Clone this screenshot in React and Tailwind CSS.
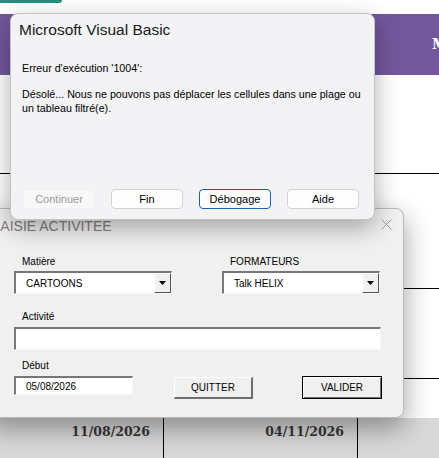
import React from "react";

const sans = "font-['Liberation_Sans',Arial,sans-serif]";

const Combo = ({ value }) => (
  <div className="w-[158px] h-[23px] flex bg-white border-t-2 border-l-2 border-r border-b border-t-[#777] border-l-[#777] border-r-[#f7f7f7] border-b-[#f7f7f7]">
    <div className="flex-1 flex items-center pl-[10px] text-[10px] text-black">{value}</div>
    <div className="w-[17px] h-full flex items-center justify-center bg-[#f0f0f0] border-t border-l border-r border-b border-t-white border-l-white border-r-[#555] border-b-[#555]">
      <svg width="7" height="4" viewBox="0 0 7 4">
        <polygon points="0,0 7,0 3.5,4" fill="#000" />
      </svg>
    </div>
  </div>
);

const Field = ({ value, className }) => (
  <div className={`flex items-center bg-white border-t-2 border-l-2 border-r border-b border-t-[#777] border-l-[#777] border-r-[#f7f7f7] border-b-[#f7f7f7] text-[10px] text-black ${className}`}>
    {value}
  </div>
);

const Label = ({ children, className = "" }) => (
  <div className={`text-[10px] leading-[12px] text-black pl-[8px] ${className}`}>{children}</div>
);

const DialogButton = ({ children, disabled, focused }) => (
  <button
    className={`w-[72px] h-[20px] rounded-[4px] text-[11px] flex items-center justify-center ${
      disabled
        ? "bg-[#f8f8f9] border border-[#f0eff2] text-[#9c9c9c]"
        : focused
        ? "bg-[#fdfdfd] border-[1.5px] border-[#1363b8] text-black"
        : "bg-[#fdfdfd] border border-[#d2d2d2] text-black"
    }`}
  >
    {children}
  </button>
);

export default function App() {
  return (
    <div className={`relative w-[439px] h-[458px] overflow-hidden bg-white ${sans}`}>
      {/* Sheet behind */}
      <div className="h-[3px] flex">
        <div className="w-[62px] h-full bg-[#22907c] rounded-br-[3px]" />
      </div>
      <div className="h-[11px]" />
      <div className="h-[61px] bg-[#73579d] flex items-center overflow-hidden">
        <span className="ml-[432px] font-['DejaVu_Serif',serif] font-bold text-[14px] text-white whitespace-nowrap">M</span>
      </div>
      <div className="h-[98px]" />
      <div className="h-px bg-black" />
      <div className="h-[114px]" />
      <div className="h-px bg-black" />
      <div className="h-[89px]" />
      <div className="h-px bg-black" />
      <div className="h-[39px]" />
      <div className="h-[40px] bg-[#d9d9d9] flex">
        <div className="w-[164px] border-r border-black flex justify-end pt-[5px] pr-[13px] font-['DejaVu_Serif',serif] font-bold text-[12.5px] text-[#383838]">
          11/08/2026
        </div>
        <div className="w-[194px] border-r border-black flex justify-end pt-[5px] pr-[13px] font-['DejaVu_Serif',serif] font-bold text-[12.5px] text-[#383838]">
          04/11/2026
        </div>
      </div>

      {/* UserForm window */}
      <div className="absolute left-[-14px] top-[208px] w-[418px] h-[210px] bg-[#f0f0f0] rounded-[8px] border border-[#b9b9b9] shadow-[0_10px_28px_rgba(0,0,0,0.38)] flex flex-col">
        <div className="h-[31px] flex items-center justify-between pl-[4px] pr-[11px]">
          <span className="text-[14px] text-[#808080] pt-[3px]">SAISIE ACTIVITEE</span>
          <svg width="11" height="11" viewBox="0 0 11 11">
            <path d="M0.5 0.5 L10.5 10.5 M10.5 0.5 L0.5 10.5" stroke="#9a9a9a" strokeWidth="1" />
          </svg>
        </div>
        <div className="pl-[27px] flex flex-col">
          <div className="flex gap-[50px] mt-[16px]">
            <div className="flex flex-col gap-[3px]">
              <Label>Matière</Label>
              <Combo value="CARTOONS" />
            </div>
            <div className="flex flex-col gap-[3px]">
              <Label>FORMATEURS</Label>
              <Combo value="Talk HELIX" />
            </div>
          </div>
          <Label className="mt-[17px]">Activité</Label>
          <Field value="" className="mt-[4px] w-[367px] h-[23px]" />
          <Label className="mt-[10px]">Début</Label>
          <div className="flex items-start mt-[4px]">
            <Field value="05/08/2026" className="w-[119px] h-[19px] pl-[10px]" />
            <button className="ml-[41px] mt-px w-[79px] h-[22px] bg-[#f0f0f0] text-[10px] text-black border-t border-l border-r-2 border-b-2 border-t-white border-l-white border-r-[#6e6e6e] border-b-[#6e6e6e]">
              QUITTER
            </button>
            <button className="ml-[49px] w-[80px] h-[23px] bg-[#f0f0f0] text-[10px] text-black border border-black shadow-[inset_1px_1px_0_#fff,inset_-1px_-1px_0_#6e6e6e]">
              VALIDER
            </button>
          </div>
        </div>
      </div>

      {/* VBA error dialog */}
      <div className="absolute left-[10px] top-[13px] w-[365px] h-[207px] bg-[#f3f2f5] rounded-[8px] border border-[#c4c4c4] shadow-[0_8px_24px_rgba(0,0,0,0.32)] flex flex-col">
        <div className="pl-[8px] pt-[7px] text-[15.5px] leading-[18px] text-[#1a1a1a]">Microsoft Visual Basic</div>
        <div className="pl-[11px] mt-[22px] text-[10.7px] leading-[14px] text-black">Erreur d'exécution '1004':</div>
        <div className="pl-[11px] mt-[12px] text-[10.7px] leading-[14px] text-black">
          Désolé... Nous ne pouvons pas déplacer les cellules dans une plage ou
          <br />
          un tableau filtré(e).
        </div>
        <div className="mt-auto mb-[10px] pl-[12px] flex gap-[16px]">
          <DialogButton disabled>Continuer</DialogButton>
          <DialogButton>Fin</DialogButton>
          <DialogButton focused>Débogage</DialogButton>
          <DialogButton>Aide</DialogButton>
        </div>
      </div>
    </div>
  );
}
